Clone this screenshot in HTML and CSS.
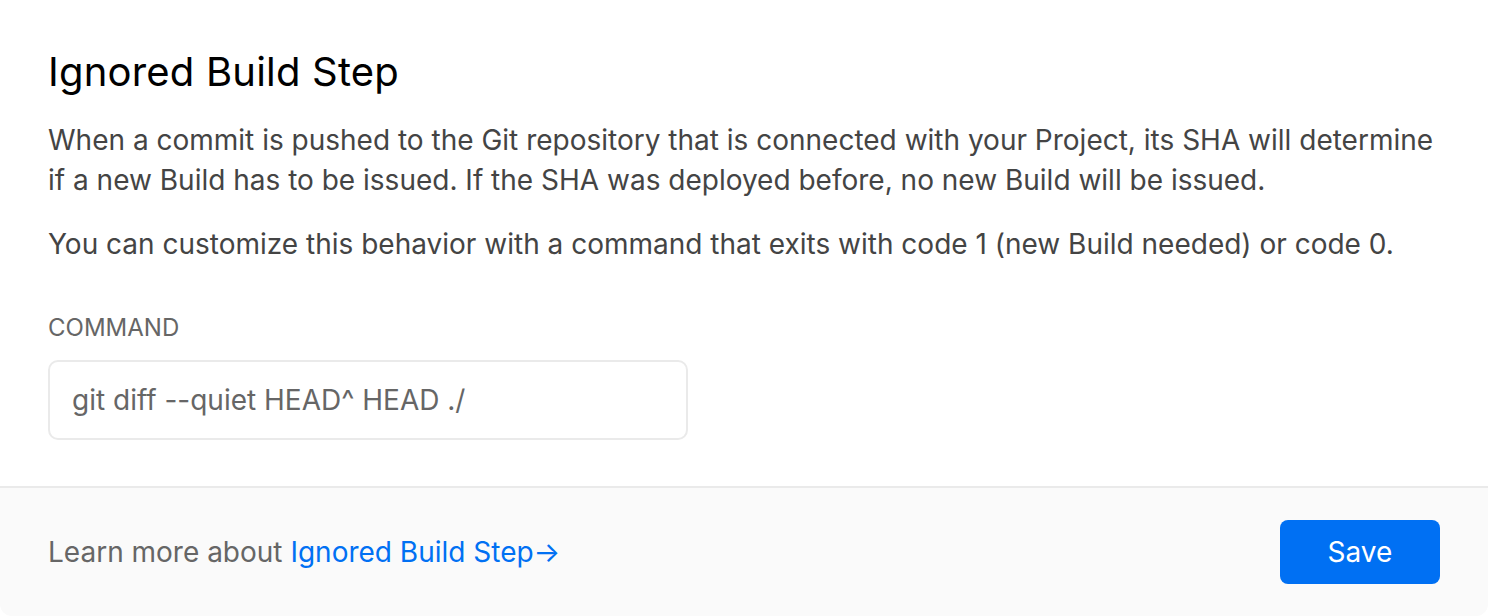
FILE: index.html
```html
<!DOCTYPE html>
<html lang="en">
<head>
<meta charset="utf-8">
<title>Ignored Build Step</title>
<link rel="stylesheet" href="styles.css">
</head>
<body>
<section class="card">
  <div class="content">
    <h2 class="title">Ignored Build Step</h2>
    <p class="text">When a commit is pushed to the Git repository that is connected with your Project, its SHA will determine if a new Build has to be issued. If the SHA was deployed before, no new Build will be issued.</p>
    <p class="text">You can customize this behavior with a command that exits with code 1 (new Build needed) or code 0.</p>
    <label class="label" for="cmd">COMMAND</label>
    <div class="input-wrap">
      <input id="cmd" class="input" type="text" placeholder="git diff --quiet HEAD^ HEAD ./">
    </div>
  </div>
  <footer class="footer">
    <p class="footer-text">Learn more about <a class="link" href="#">Ignored Build Step→</a></p>
    <button class="button" type="button">Save</button>
  </footer>
</section>
</body>
</html>
```

FILE: styles.css
```css
* { box-sizing: border-box; }
html, body { margin: 0; padding: 0; background: #fff; }
body {
  font-family: Inter, "Noto Sans", "Liberation Sans", sans-serif;
  color: #000;
}
.card {
  width: 1488px;
  height: 616px;
  display: flex;
  flex-direction: column;
  background: #fff;
  border-radius: 0 0 12px 12px;
  overflow: hidden;
}
.content {
  padding: 48px 48px 46px;
  display: flex;
  flex-direction: column;
  align-items: flex-start;
}
.title {
  margin: 0;
  font-size: 40px;
  line-height: 48px;
  font-weight: 400;
  color: #000;
  letter-spacing: 0.2px;
}
.text {
  margin: 24px 0 0;
  font-size: 28px;
  line-height: 40px;
  color: #444;
}
.label {
  margin-top: 48px;
  font-size: 24px;
  line-height: 32px;
  color: #666;
}
.input-wrap {
  margin-top: 16px;
  width: 640px;
  height: 80px;
  border: 2px solid #eaeaea;
  border-radius: 10px;
  display: flex;
  align-items: center;
  padding: 0 22px;
}
.input {
  border: 0;
  outline: 0;
  width: 100%;
  background: transparent;
  font-family: inherit;
  font-size: 28px;
  color: #444;
  padding: 0;
}
.input::placeholder { color: #666; opacity: 1; }
.footer {
  flex: 1;
  border-top: 2px solid #eaeaea;
  background: #fafafa;
  display: flex;
  align-items: center;
  justify-content: space-between;
  padding: 0 48px;
}
.footer-text {
  margin: 0;
  font-size: 28px;
  line-height: 40px;
  color: #666;
}
.link { color: #0070f3; text-decoration: none; }
.button {
  width: 160px;
  height: 64px;
  border: 0;
  border-radius: 8px;
  background: #0070f3;
  color: #fff;
  font-family: inherit;
  font-size: 28px;
  font-weight: 400;
  cursor: pointer;
}
```
